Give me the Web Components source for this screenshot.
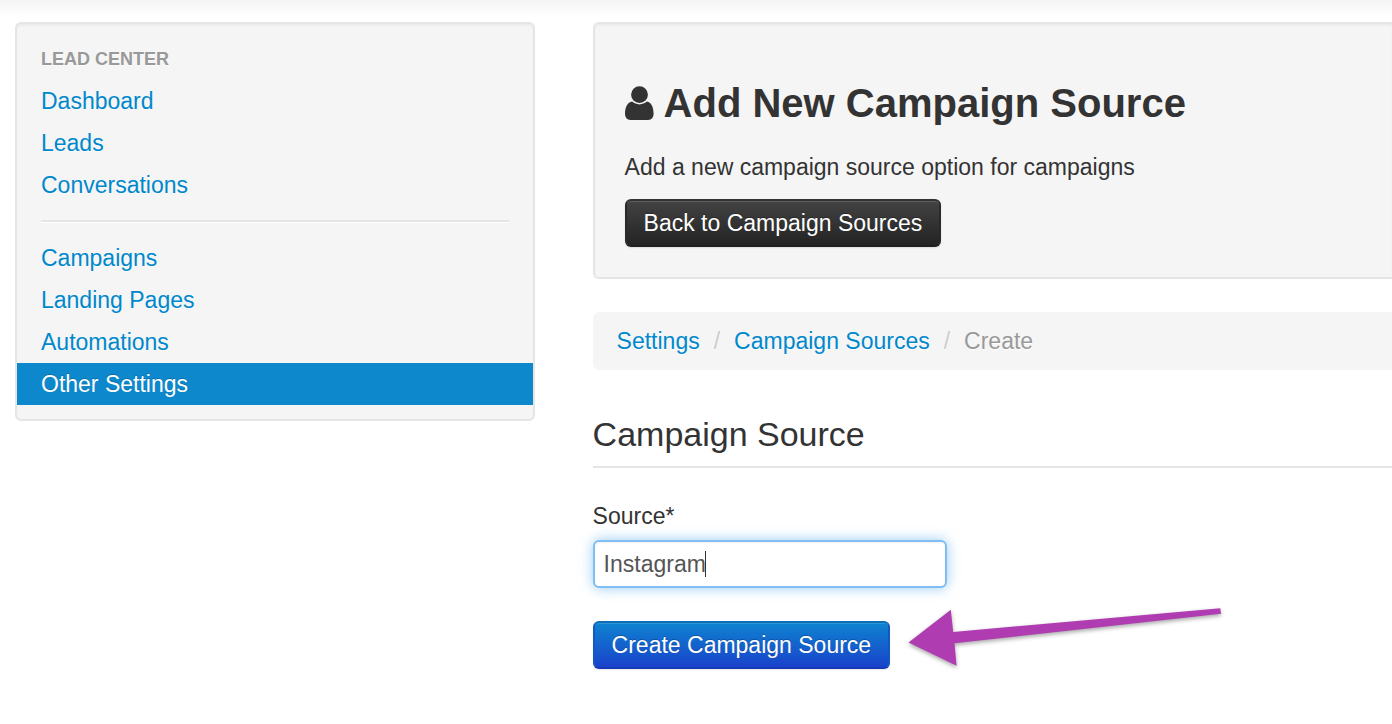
<!DOCTYPE html>
<html lang="en">
<head>
<meta charset="utf-8">
<meta name="viewport" content="width=device-width, initial-scale=1">
<title>Add New Campaign Source</title>
<style>
  body { margin: 0; background: #fff; color: #333; font: 23px/33px "Liberation Sans", Arial, Helvetica, sans-serif; }
</style>
</head>
<body>
<app-layout>
  <side-nav slot="side" heading="Lead Center">
    <nav-item href="#dashboard">Dashboard</nav-item>
    <nav-item href="#leads">Leads</nav-item>
    <nav-item href="#conversations">Conversations</nav-item>
    <nav-divider></nav-divider>
    <nav-item href="#campaigns">Campaigns</nav-item>
    <nav-item href="#landing-pages">Landing Pages</nav-item>
    <nav-item href="#automations">Automations</nav-item>
    <nav-item href="#settings" active>Other Settings</nav-item>
  </side-nav>
  <page-hero>
    <span slot="title">Add New Campaign Source</span>
    <span slot="lead">Add a new campaign source option for campaigns</span>
    <app-button variant="inverse">Back to Campaign Sources</app-button>
  </page-hero>
  <bread-crumbs>
    <crumb-item href="#settings">Settings</crumb-item>
    <crumb-item href="#sources">Campaign Sources</crumb-item>
    <crumb-item>Create</crumb-item>
  </bread-crumbs>
  <source-form>
    <app-button variant="primary">Create Campaign Source</app-button>
    <pointer-arrow></pointer-arrow>
  </source-form>
</app-layout>

<script>
const define = (name, html, setup) => {
  const template = document.createElement('template');
  template.innerHTML = html;
  customElements.define(name, class extends HTMLElement {
    constructor() {
      super();
      this.attachShadow({ mode: 'open' }).append(template.content.cloneNode(true));
    }
    connectedCallback() { if (setup) setup(this, this.shadowRoot); }
  });
};

define('app-layout', `
  <style>
    :host { display: block; padding: 22px 0 32px 15px; background: linear-gradient(#f4f4f4, #fff 16px) no-repeat; overflow: hidden; }
    .columns { display: grid; grid-template-columns: 13fr 20fr; column-gap: 58px; align-items: start; }
    main { min-width: 0; }
  </style>
  <div class="columns">
    <slot name="side"></slot>
    <main><slot></slot></main>
  </div>`);

define('side-nav', `
  <style>
    :host { display: block; box-sizing: border-box; padding: 14px 0; background: #f5f5f5; border: 2px solid #e5e5e5; border-radius: 6px; box-shadow: inset 0 2px 2px rgba(0,0,0,.04); }
    h2 { margin: 0; padding: 0 24px; font-size: 18px; line-height: 42px; color: #999; text-transform: uppercase; text-shadow: 0 1px 0 rgba(255,255,255,.5); }
  </style>
  <nav><h2></h2><slot></slot></nav>`,
  (el, root) => { root.querySelector('h2').textContent = el.getAttribute('heading'); });

define('nav-item', `
  <style>
    :host { display: block; }
    a { display: block; padding: 0 24px; line-height: 42px; color: #08c; text-decoration: none; text-shadow: 0 1px 0 rgba(255,255,255,.5); }
    :host([active]) a { color: #fff; background: #0d88cd; text-shadow: 0 -1px 0 rgba(0,0,0,.2); }
  </style>
  <a><slot></slot></a>`,
  (el, root) => { root.querySelector('a').href = el.getAttribute('href'); });

define('nav-divider', `
  <style>
    :host { display: block; height: 2px; margin: 14px 24px; background: #e5e5e5; border-bottom: 1px solid #fff; }
  </style>`);

define('page-hero', `
  <style>
    :host { display: block; padding: 47px 30px 30px; background: #f5f5f5; border: 2px solid #e5e5e5; border-right: 0; border-radius: 6px 0 0 6px; box-shadow: inset 0 2px 2px rgba(0,0,0,.04); }
    h1 { display: flex; align-items: center; gap: 10px; margin: 0 0 16px; font-size: 40px; line-height: 64px; white-space: nowrap; }
    p { margin: 0 0 15px; }
    svg { flex: none; display: block; }
  </style>
  <h1>
    <svg width="29" height="35" viewBox="0 0 29 35" fill="#333" aria-hidden="true">
      <circle cx="14.5" cy="8.6" r="8.4"/>
      <path d="M7.2 15.6C2.4 16.2 0 21.5 0 27.8C0 31.5 2.2 34 5.5 34H23.2C26.4 34 28.6 31.5 28.6 27.8C28.6 21.5 26.4 16.2 21.8 15.6C19.8 17.4 17.2 18.4 14.5 18.4C11.7 18.4 9.2 17.4 7.2 15.6Z"/>
    </svg>
    <slot name="title"></slot>
  </h1>
  <p><slot name="lead"></slot></p>
  <slot></slot>`);

define('app-button', `
  <style>
    :host { display: block; width: fit-content; }
    button { display: block; box-sizing: border-box; height: 48px; padding: 0 17px; border: 2px solid; border-radius: 6px; font: inherit; color: #fff; white-space: nowrap; cursor: pointer; text-shadow: 0 -1px 0 rgba(0,0,0,.25); background-origin: border-box; box-shadow: inset 0 1px 0 rgba(255,255,255,.15), 0 1px 2px rgba(0,0,0,.1); }
    :host([variant=inverse]) button { background-image: linear-gradient(#444, #222); border-color: #333 #2a2a2a #202020; }
    :host([variant=primary]) button { background-image: linear-gradient(#0d86d0, #1a3fcb); border-color: #0b6fb8 #1259be #173bb8; }
  </style>
  <button type="button"><slot></slot></button>`);

define('bread-crumbs', `
  <style>
    :host { display: block; margin: 33px 0 32px; padding: 12px 24px; background: #f5f5f5; border-radius: 6px 0 0 6px; line-height: 34px; }
    nav { display: flex; }
  </style>
  <nav aria-label="Breadcrumb"><slot></slot></nav>`);

define('crumb-item', `
  <style>
    :host { display: flex; white-space: nowrap; color: #999; text-shadow: 0 1px 0 #fff; }
    a { color: #08c; text-decoration: none; }
    i { padding: 0 14px; font-style: normal; color: #ccc; }
  </style>
  <a><slot></slot></a>`,
  (el, root) => {
    const link = root.querySelector('a');
    if (el.hasAttribute('href')) {
      link.href = el.getAttribute('href');
      const slash = document.createElement('i');
      slash.textContent = '/';
      root.append(slash);
    } else {
      link.style.color = 'inherit';
    }
  });

define('source-form', `
  <style>
    :host { display: block; }
    h2 { margin: 0 0 32px; font-size: 34px; font-weight: 400; line-height: 64px; border-bottom: 2px solid #e5e5e5; }
    label { display: block; margin-bottom: 7px; }
    .field { position: relative; width: 354px; max-width: 100%; margin-bottom: 33px; }
    input { display: block; box-sizing: border-box; width: 100%; height: 48px; padding: 0 9px; border: 2px solid #80bdf0; border-radius: 6px; background: #fff; color: #555; font: inherit; outline: 0; box-shadow: inset 0 1px 2px rgba(0,0,0,.06), 0 0 13px rgba(82,168,236,.6); }
    .caret { position: absolute; left: 112px; top: 11px; width: 1px; height: 26px; background: #333; }
    .actions { position: relative; }
  </style>
  <form>
    <h2>Campaign Source</h2>
    <label for="source">Source*</label>
    <div class="field"><input id="source" type="text" value="Instagram"><span class="caret"></span></div>
    <div class="actions"><slot></slot></div>
  </form>`);

define('pointer-arrow', `
  <style>
    :host { position: absolute; left: 307px; top: -21px; pointer-events: none; }
    svg { display: block; filter: drop-shadow(0 2px 2px rgba(0,0,0,.35)); }
  </style>
  <svg width="330" height="76" viewBox="0 0 330 76" aria-hidden="true">
    <path d="M8.5 42.5L50.8 9.7L53.2 32L320.3 8.2L321 13.7L54.5 43.2L56.6 65.8Z" fill="#b03cb2"/>
  </svg>`);
</script>
</body>
</html>
